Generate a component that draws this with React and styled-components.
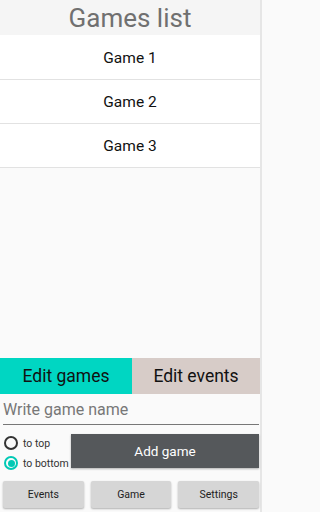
import React, { useState } from 'react'
import styled, { createGlobalStyle } from 'styled-components'

const GlobalStyle = createGlobalStyle`
  html, body {
    margin: 0;
    padding: 0;
    background: #fafafa;
  }
  body {
    font-family: Roboto, "Liberation Sans", sans-serif;
  }
`

const Screen = styled.div`
  width: 260px;
  height: 512px;
  display: flex;
  flex-direction: column;
  background: #fafafa;
  border-right: 2px solid #e6e6e6;
`

const Title = styled.div`
  flex: 0 0 35px;
  min-height: 0;
  overflow: hidden;
  background: #f5f5f5;
  color: #707070;
  font-size: 26px;
  line-height: 37px;
  text-align: center;
`

const List = styled.div`
  flex: 1;
  display: flex;
  flex-direction: column;
  border-top: 1px solid #fff;
`

const Item = styled.div`
  flex: 0 0 44px;
  box-sizing: border-box;
  background: #fff;
  border-bottom: 1px solid #e2e2e2;
  display: flex;
  align-items: center;
  justify-content: center;
  font-size: 15.5px;
  color: #111;
`

const Tabs = styled.div`
  flex: 0 0 36px;
  display: flex;
`

const Tab = styled.div`
  width: ${p => (p.$wide ? 132 : 128)}px;
  background: ${p => (p.$active ? '#00d6c2' : '#d7ccc8')};
  display: flex;
  align-items: center;
  justify-content: center;
  font-size: 17.5px;
  color: #111;
`

const NameInput = styled.input`
  flex: 0 0 31px;
  min-height: 0;
  box-sizing: border-box;
  margin: 0 1px 0 3px;
  padding: 0;
  border: none;
  border-bottom: 1px solid #777;
  background: transparent;
  font-family: inherit;
  font-size: 16px;
  color: #222;
  outline: none;
  &::placeholder {
    color: #777;
  }
`

const Controls = styled.div`
  flex: 0 0 34px;
  min-height: 0;
  display: flex;
  align-items: flex-start;
  margin-top: 9px;
  padding: 0 1px 0 4px;
`

const Radios = styled.div`
  width: 67px;
  padding-top: 2px;
  display: flex;
  flex-direction: column;
  gap: 6px;
`

const RadioRow = styled.label`
  display: flex;
  align-items: center;
  gap: 5px;
  height: 14px;
  font-size: 10.5px;
  color: #333;
`

const Circle = styled.span`
  box-sizing: border-box;
  width: 14px;
  height: 14px;
  border-radius: 50%;
  border: 2px solid ${p => (p.$on ? '#00c9b5' : '#333')};
  display: flex;
  align-items: center;
  justify-content: center;
  &::after {
    content: '';
    width: 7px;
    height: 7px;
    border-radius: 50%;
    background: ${p => (p.$on ? '#00c9b5' : 'transparent')};
  }
`

const AddButton = styled.button`
  flex: 1;
  height: 34px;
  border: none;
  background: #55585b;
  color: #fff;
  font-family: inherit;
  font-size: 13.5px;
  box-shadow: 0 1px 2px rgba(0, 0, 0, 0.3);
`

const Nav = styled.div`
  flex: 0 0 27px;
  min-height: 0;
  display: flex;
  gap: 7px;
  margin-top: 13px;
  padding: 0 1px 4px 3px;
`

const NavButton = styled.button`
  flex: 1;
  height: 27px;
  border: none;
  border-radius: 2px;
  background: #d6d6d6;
  font-family: inherit;
  font-size: 10.5px;
  color: #222;
  box-shadow: 0 1px 2px rgba(0, 0, 0, 0.3);
`

const games = ['Game 1', 'Game 2', 'Game 3']

export default function App() {
  const [toBottom, setToBottom] = useState(true)

  return (
    <>
      <GlobalStyle />
      <Screen>
        <Title>Games list</Title>
        <List>
          {games.map(g => (
            <Item key={g}>{g}</Item>
          ))}
        </List>
        <Tabs>
          <Tab $active $wide>Edit games</Tab>
          <Tab>Edit events</Tab>
        </Tabs>
        <NameInput placeholder="Write game name" />
        <Controls>
          <Radios>
            <RadioRow onClick={() => setToBottom(false)}>
              <Circle $on={!toBottom} />
              to top
            </RadioRow>
            <RadioRow onClick={() => setToBottom(true)}>
              <Circle $on={toBottom} />
              to bottom
            </RadioRow>
          </Radios>
          <AddButton>Add game</AddButton>
        </Controls>
        <Nav>
          <NavButton>Events</NavButton>
          <NavButton>Game</NavButton>
          <NavButton>Settings</NavButton>
        </Nav>
      </Screen>
    </>
  )
}
